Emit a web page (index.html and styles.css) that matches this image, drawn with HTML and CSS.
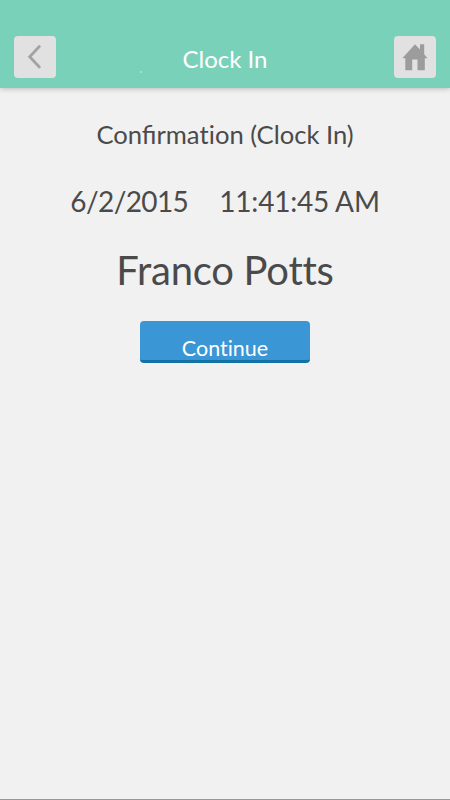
FILE: index.html
```html
<!DOCTYPE html>
<html lang="en"><head><meta charset="utf-8"><title>Clock In</title><link rel="stylesheet" href="styles.css"></head>
<body>
<header class="bar">
<button class="nav" aria-label="Back"><svg width="42" height="42" viewBox="0 0 42 42"><path class="chevron" d="M25.300 10.500 15.700 20.800 25.300 31"/></svg></button>
<span class="dot"></span>
<h1 class="title">Clock In</h1>
<button class="nav" aria-label="Home"><svg width="42" height="42" viewBox="0 0 42 42"><path class="house" d="M8.300 22.300 21 8.300 26 13.500V8.300h4.200v10L33.500 22.300H30.800V34.300H23.500V23.500H18.200V34.300H11.300V22.300Z"/></svg></button>
</header>
<main class="content">
<h2 class="heading">Confirma<span class="plain">ti</span>on (Clock In)</h2>
<div class="stamp"><span class="date">6/2/2015</span><span class="time">11:41:45 AM</span></div>
<p class="name plain">Franco Potts</p>
<button class="continue plain">Continue</button>
</main>
</body></html>
```
FILE: styles.css
```css
* { box-sizing: border-box; }
body { margin: 0; height: 800px; background: #f1f1f1; color: #4a4a4a; font-family: Lato, sans-serif; border-bottom: 1px solid #999; overflow: hidden; }
h1, h2, p { margin: 0; font-weight: 400; }
.bar { position: relative; height: 88px; padding: 36px 14px 0; display: flex; justify-content: space-between; background: #7ad1b9; box-shadow: 0 1px 5px rgba(0,0,0,.22); }
.nav { width: 42px; height: 42px; padding: 0; border: 0; border-radius: 4px; background: #e1e1e1; }
.nav svg { display: block; }
.chevron { fill: none; stroke: #a3a3a3; stroke-width: 2.8; stroke-linecap: round; }
.house { fill: #9c9c9c; }
.dot { position: absolute; left: 140px; top: 71px; width: 2px; height: 2px; background: #a5dfcf; }
.title { color: #fff; font-size: 24px; line-height: 46px; }
.content { display: flex; flex-direction: column; align-items: center; }
.plain { font-variant-ligatures: none; }
.heading { font-size: 25.6px; line-height: 30px; margin-top: 31px; }
.stamp { display: flex; gap: 31px; font-size: 28px; line-height: 34px; margin-top: 35px; }
.date { letter-spacing: -.6px; }
.time { letter-spacing: -.2px; }
.name { font-size: 40px; line-height: 48px; margin-top: 28px; letter-spacing: -.25px; }
.continue { width: 170px; height: 42px; margin-top: 27px; padding: 16px 0 0; border: 0; border-bottom: 3px solid #1272a5; border-radius: 4px; background: #3a96d5; color: #fff; font-family: Lato, sans-serif; font-size: 21.5px; line-height: 23px; }
```
